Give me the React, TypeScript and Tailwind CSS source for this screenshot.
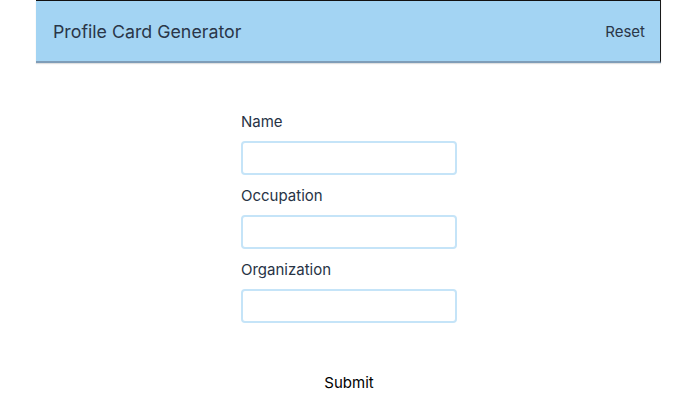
import React from "react";

export default function App() {
  const fields = ["Name", "Occupation", "Organization"];
  return (
    <div className="w-[698px] h-[406px] bg-white" style={{ fontFamily: "Inter, 'Noto Sans', sans-serif" }}>
      <header className="ml-[36px] w-[625px] h-[63px] bg-[#a3d4f3] border-t border-t-[#111] border-r border-r-[#1a1a1a] border-b-2 border-b-[#7f9db8] shadow-[0_1px_1px_rgba(0,0,0,0.12)] flex items-center justify-between pl-[17px] pr-[15px] pt-[2px]">
        <h1 className="text-[17.8px] text-[#2a3648] font-normal">Profile Card Generator</h1>
        <button className="text-[15px] text-[#2a3648]">Reset</button>
      </header>
      <form className="w-[216px] mx-auto mt-[46px] flex flex-col" onSubmit={(e) => e.preventDefault()}>
        {fields.map((f) => (
          <div key={f} className="flex flex-col mb-2">
            <label className="text-[15px] leading-[24px] text-[#273345] mb-[7px] pt-[1px]">{f}</label>
            <input className="h-[34px] rounded-[4px] border-2 border-[#c5e4f8] outline-none px-2" />
          </div>
        ))}
        <button type="submit" className="mt-[41px] text-[15px] text-black self-center">Submit</button>
      </form>
    </div>
  );
}
